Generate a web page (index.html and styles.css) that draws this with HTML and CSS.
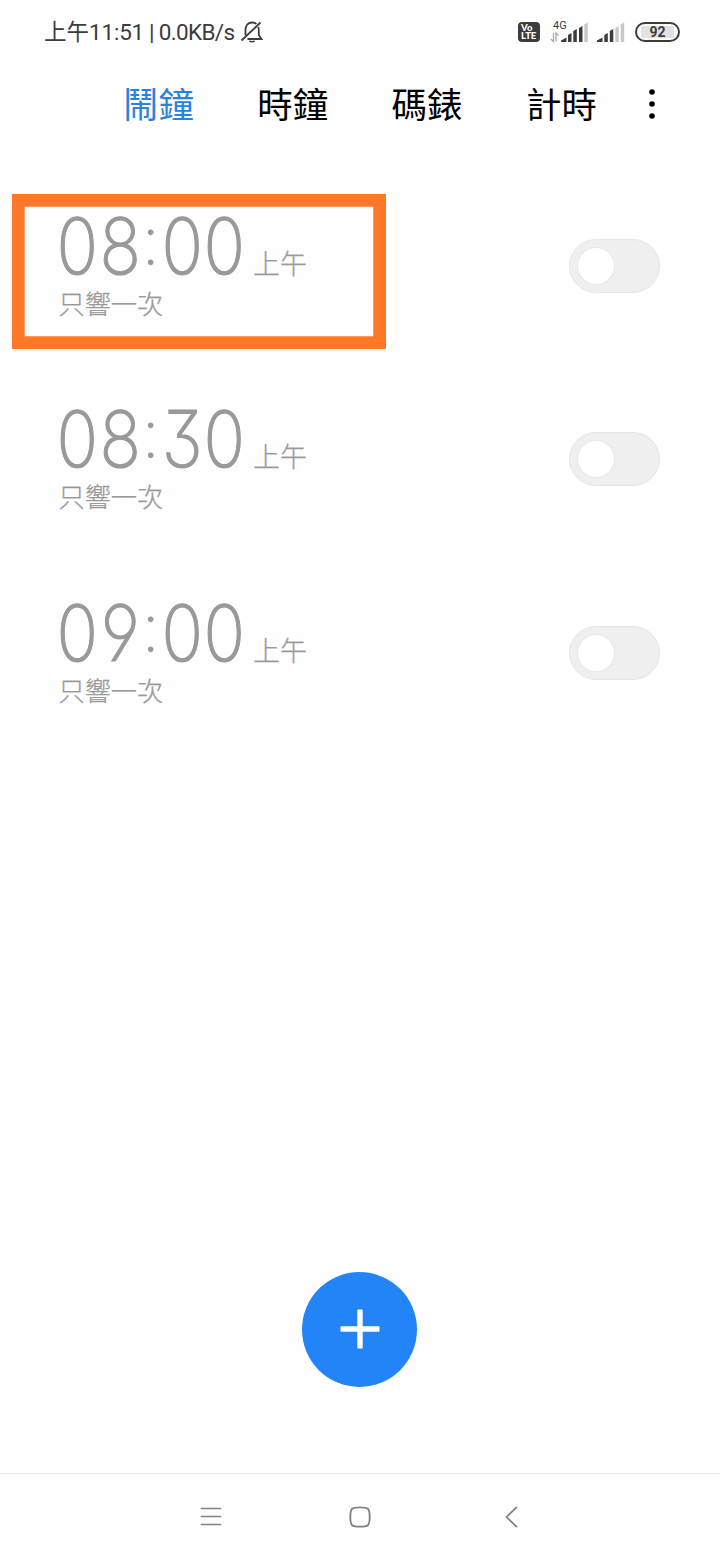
FILE: index.html
```html
<!DOCTYPE html>
<html lang="zh-Hant">
<head>
<meta charset="utf-8">
<title>鬧鐘</title>
<link rel="stylesheet" href="styles.css">
</head>
<body>
<div class="screen">
  <header class="status">
    <span class="status-text">上午<span class="clock">11:51</span><span class="speed"> | 0.0KB/s</span></span>
    <svg class="bell" width="24" height="24" viewBox="0 0 24 24" fill="none" stroke="#3c3c3c" stroke-width="1.8"><path d="M5.500 15.500V10C5.500 5.500 8 2.500 12 2.500c1.800 0 3.300.5 4.500 1.400M18.300 7c.4 1.100.5 2.200.5 3.500v4.500l2.700 4H7.500"/><path d="M1.500 20.500L20.500 2.500"/><path d="M9.500 20.800c1.300 1.200 3.700 1.200 5 0"/></svg>
    <div class="status-right">
      <span class="volte"><span>Vo</span><span>LTE</span></span>
      <span class="cell"><span class="net">4G</span>
        <svg width="38" height="21" viewBox="0 0 38 21"><g fill="none" stroke="#aaa" stroke-width="1.300"><path d="M3.500 11v8.500L.8 17M6 19.500V11l2.500 2.500"/></g><g fill="#3c3c3c"><path d="M11 20v-1.500l5.500-3V20zM18 20v-7l3.500-2V20zM23.300 20V9l3.500-2V20zM29 20V6l3.500-2V20z"/><path fill="#c8c8c8" d="M34.300 20V2.500l3.500-2V20z"/></g></svg>
      </span>
      <svg class="sim2" width="28" height="21" viewBox="0 0 28 21"><g fill="#3c3c3c"><path d="M0 20v-1.500l5.500-3V20zM7.300 20v-7l3.500-2V20zM12.800 20V9l3.500-2V20z"/><path fill="#c8c8c8" d="M18.300 20V6l3.500-2V20zM23.700 20V2.500l3.500-2V20z"/></g></svg>
      <span class="battery"><span>92</span></span>
    </div>
  </header>
  <nav class="tabs">
    <span class="tab active">鬧鐘</span><span class="tab">時鐘</span><span class="tab">碼錶</span><span class="tab">計時</span>
    <svg class="more" width="8" height="32" viewBox="0 0 8 32"><circle cx="4" cy="4" r="2.800"/><circle cx="4" cy="16" r="2.800"/><circle cx="4" cy="28" r="2.800"/></svg>
  </nav>
  <main class="alarms">
    <section class="alarm">
      <div class="info">
        <div class="line"><div class="time"><b>0</b><b>8</b><i>:</i><b>0</b><b>0</b></div><span class="ampm">上午</span></div>
        <div class="repeat">只響一次</div>
      </div>
      <span class="toggle"></span>
      <div class="highlight"></div>
    </section>
    <section class="alarm">
      <div class="info">
        <div class="line"><div class="time"><b>0</b><b>8</b><i>:</i><b>3</b><b>0</b></div><span class="ampm">上午</span></div>
        <div class="repeat">只響一次</div>
      </div>
      <span class="toggle"></span>
    </section>
    <section class="alarm">
      <div class="info">
        <div class="line"><div class="time"><b>0</b><b>9</b><i>:</i><b>0</b><b>0</b></div><span class="ampm">上午</span></div>
        <div class="repeat">只響一次</div>
      </div>
      <span class="toggle"></span>
    </section>
  </main>
  <div class="fab"><svg width="40" height="40" viewBox="0 0 40 40" fill="#fff"><rect x="17.300" y="0.500" width="5.400" height="39" rx="1"/><rect x="0.500" y="17.300" width="39" height="5.400" rx="1"/></svg></div>
  <footer class="sysnav">
    <svg width="22" height="22" viewBox="0 0 22 22" fill="none" stroke="#808080" stroke-width="1.700" stroke-linecap="round"><path d="M1.500 2.500h19M1.500 10.500h19M1.500 18.500h19"/></svg>
    <svg width="22" height="22" viewBox="0 0 22 22" fill="none" stroke="#808080" stroke-width="1.800"><path d="M11 1.300c8 0 9.700.7 9.700 9.700s-1.700 9.700-9.700 9.700S1.300 20 1.300 11 3 1.300 11 1.300z"/></svg>
    <svg width="22" height="22" viewBox="0 0 22 22" fill="none" stroke="#808080" stroke-width="1.700" stroke-linecap="round"><path d="M16.500 1.300L6.500 11l10 9.700"/></svg>
  </footer>
</div>
</body>
</html>
```
FILE: styles.css
```css
body { margin: 0; background: #fff; }
.screen {
  width: 720px; height: 1560px; display: flex; flex-direction: column;
  align-items: stretch; background: #fefefe; overflow: hidden;
  font-family: Roboto, "Noto Sans CJK TC", sans-serif;
}
.status { height: 64px; box-sizing: border-box; padding: 0 40px 0 44px; display: flex; align-items: center; color: #3c3c3c; }
.status-text { font-size: 22.500px; line-height: 30px; white-space: nowrap; }
.clock { letter-spacing: -0.200px; }
.speed { letter-spacing: -0.650px; }
.bell { margin-left: 6px; }
.status-right { margin-left: auto; display: flex; align-items: center; }
.volte {
  width: 22px; height: 20px; border-radius: 4px; background: #3c3c3c; color: #fff;
  display: flex; flex-direction: column; justify-content: center; box-sizing: border-box; padding-left: 3px;
  font: 900 9.500px/8.500px Lato, sans-serif;
}
.cell { position: relative; margin-left: 10px; display: flex; }
.net { position: absolute; left: 3px; top: -2px; font-size: 11px; line-height: 12px; }
.sim2 { margin-left: 9px; }
.battery {
  margin-left: 10px; width: 45px; height: 20px; box-sizing: border-box; border: 2px solid #3c3c3c;
  border-radius: 10px; display: flex; align-items: center; justify-content: center;
}
.battery span { width: 33px; height: 12px; background: #e2e2e2; text-align: center; font: 700 14px/13px Roboto, sans-serif; }
.tabs { height: 78px; padding-left: 123px; display: flex; align-items: center; }
.tab { width: 134.300px; font: 400 35.500px/52px "Noto Sans CJK TC", sans-serif; color: #000; }
.tab.active { color: #2a82e0; }
.more { margin: 2px 0 0 -12px; }
.alarms { margin-top: 52px; display: flex; flex-direction: column; }
.alarm { position: relative; height: 193.400px; box-sizing: border-box; padding: 8px 60px 0 56px; display: flex; justify-content: space-between; align-items: flex-start; color: #999; }
.line { display: flex; align-items: baseline; }
.time { display: flex; width: 189.500px; font: 200 78px/88px Inter, sans-serif; font-feature-settings: "cv09", "cv03", "cv04"; -webkit-text-stroke: 1.200px #999; }
.time b, .time i { width: 42.500px; font-weight: inherit; font-style: normal; display: flex; justify-content: center; transform: scaleX(.88); }
.time i { width: 19.500px; font-size: 68px; transform: translateY(-6px); -webkit-text-stroke-width: 0.300px; }
.ampm { margin-left: 7.500px; font: 300 27px/30px "Noto Sans CJK TC", sans-serif; -webkit-text-stroke: 0.250px #999; }
.repeat { margin: -4px 0 0 2.500px; font: 300 26.200px/34px "Noto Sans CJK TC", sans-serif; -webkit-text-stroke: 0.250px #999; }
.toggle { margin-top: 37px; width: 91px; height: 54px; box-sizing: border-box; border: 1px solid #e6e6e6; border-radius: 27px; background: #efefef; padding: 8px; }
.toggle::before { content: ""; display: block; width: 36px; height: 36px; border-radius: 50%; background: #fff; box-shadow: 0 0 0 1px #e8e8e8; }
.highlight { position: absolute; left: 12px; top: 0; width: 374px; height: 155px; box-sizing: border-box; box-shadow: inset 0 0 0 12.700px #ff7729; }
.fab { margin: 497.500px auto 0 302.400px; width: 115px; height: 115px; border-radius: 50%; background: #2384f7; display: flex; align-items: center; justify-content: center; }
.sysnav { margin-top: auto; height: 87px; box-sizing: border-box; border-top: 1px solid #e6e6e6; padding: 0 198px 0 200px; display: flex; align-items: center; justify-content: space-between; }
.sysnav svg:nth-child(2) { margin-left: -2px; }
```
